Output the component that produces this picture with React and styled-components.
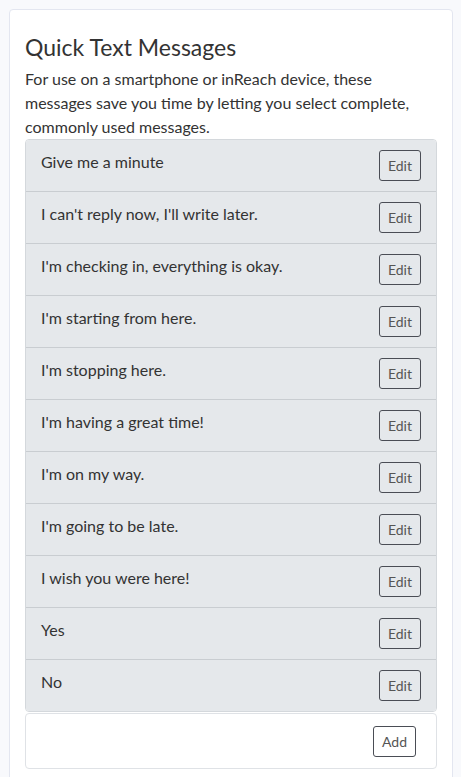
import React from 'react';
import styled, { createGlobalStyle } from 'styled-components';

const GlobalStyle = createGlobalStyle`
  body {
    margin: 0;
    background-color: #f8f9fc;
    font-family: Lato, 'Noto Sans', sans-serif;
    color: #333;
  }
`;

const Page = styled.div`
  padding: 9px 8px 0 9px;
`;

const Card = styled.div`
  background-color: #fff;
  border: 1px solid #e3e6f0;
  border-radius: 4px;
  padding: 15px 15px 40px;
`;

const Title = styled.h4`
  font-size: 23px;
  font-weight: 400;
  line-height: 1.2;
  color: #333;
  margin: 9px 0 5px;
`;

const Intro = styled.p`
  font-size: 16px;
  line-height: 24px;
  margin: 0;
`;

const List = styled.ul`
  list-style: none;
  margin: 0;
  padding: 0;
  border: 1px solid #d4d8dc;
  border-radius: 4px;
  overflow: hidden;
`;

const Item = styled.li`
  display: flex;
  align-items: flex-start;
  justify-content: space-between;
  background-color: #e5e8eb;
  padding: 10px 15px 10px 15px;
  font-size: 16px;
  line-height: 24px;
  & + & {
    border-top: 1px solid #c9cdd1;
  }
`;

const Button = styled.button`
  font-family: inherit;
  font-size: 14px;
  color: #555;
  background: transparent;
  border: 1px solid #4a4d55;
  border-radius: 3px;
  height: 31px;
  padding: 0 8px;
  cursor: pointer;
`;

const Footer = styled.div`
  display: flex;
  justify-content: flex-end;
  margin-top: 1px;
  border: 1px solid #dfe2e6;
  border-radius: 4px;
  padding: 12px 20px 11px;
`;

const messages = [
  'Give me a minute',
  "I can't reply now, I'll write later.",
  "I'm checking in, everything is okay.",
  "I'm starting from here.",
  "I'm stopping here.",
  "I'm having a great time!",
  "I'm on my way.",
  "I'm going to be late.",
  'I wish you were here!',
  'Yes',
  'No',
];

const App = () => (
  <Page>
    <GlobalStyle />
    <Card>
      <Title>Quick Text Messages</Title>
      <Intro>
        For use on a smartphone or inReach device, these messages save you
        time by letting you select complete, commonly used messages.
      </Intro>
      <List>
        {messages.map((msg) => (
          <Item key={msg}>
            <span>{msg}</span>
            <Button>Edit</Button>
          </Item>
        ))}
      </List>
      <Footer>
        <Button>Add</Button>
      </Footer>
    </Card>
  </Page>
);

export default App;
